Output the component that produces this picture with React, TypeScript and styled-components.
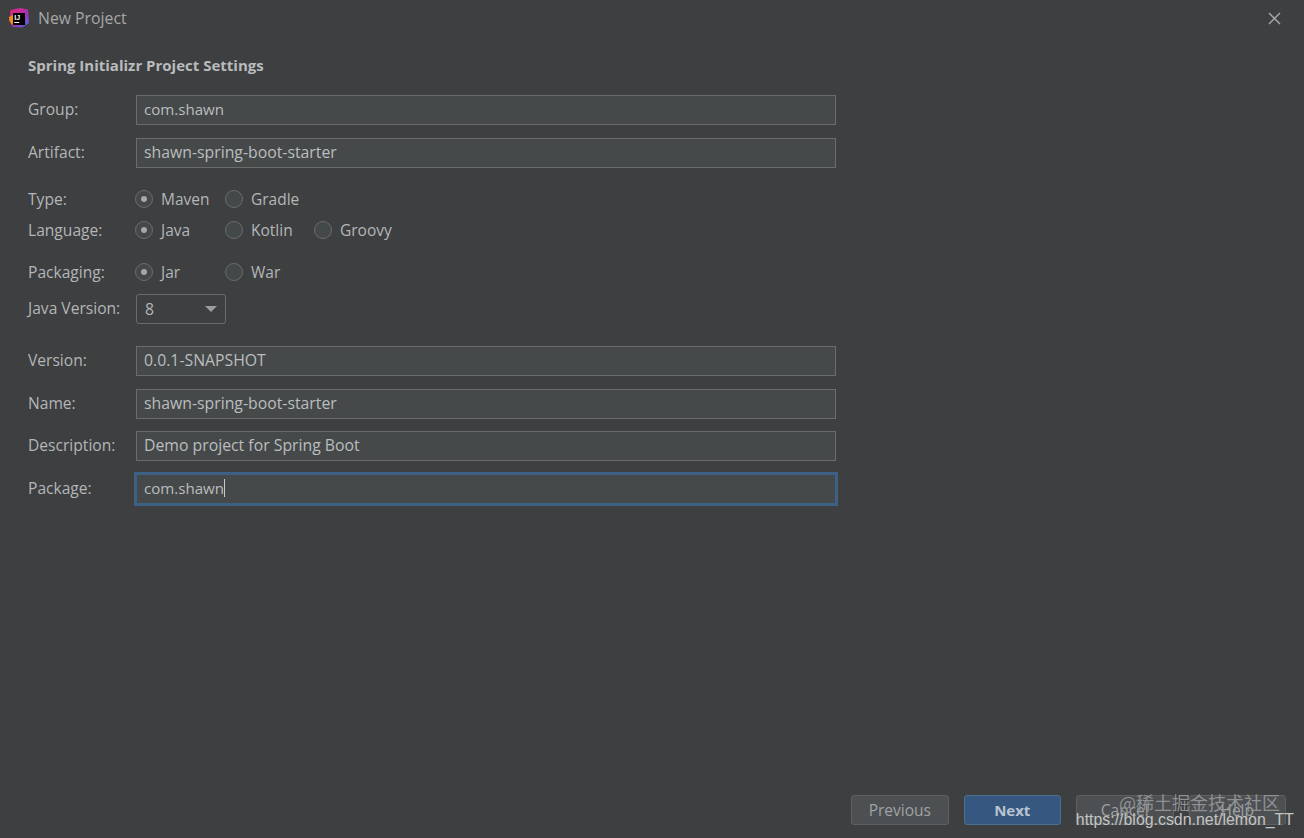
import React from "react";
import styled, { createGlobalStyle } from "styled-components";

const COLOURS = {
  Background: "#3d3f41",
  Text: "#b4b6b7",
  Field: "#45494a",
  FieldBorder: "#6a6c6c",
  Focus: "#3d6185",
  Button: "#4c5052",
  ButtonBorder: "#5e6060",
  Primary: "#365880",
  PrimaryBorder: "#4c708c",
};

const GlobalStyle = createGlobalStyle`
  html, body {
    margin: 0;
    padding: 0;
    background: ${COLOURS.Background};
  }

  body {
    font-family: "Open Sans", "Noto Sans", sans-serif;
    font-size: 15.8px;
    color: ${COLOURS.Text};
    overflow: hidden;
  }
`;

const Window = styled.div`
  position: relative;
  display: flex;
  flex-flow: column nowrap;
  width: 1304px;
  height: 838px;
  background-color: ${COLOURS.Background};
`;

const TitleBar = styled.div`
  display: flex;
  align-items: center;
  height: 36px;
  padding: 0 23px 0 8px;
  flex-shrink: 0;
`;

const WindowTitle = styled.span`
  margin-left: 8px;
  flex: 1;
  color: #a6a8a9;
`;

const Form = styled.div`
  display: flex;
  flex-flow: column nowrap;
  flex: 1;
  padding: 0 0 0 28px;
`;

const SectionTitle = styled.h2`
  margin: 19px 0 19px;
  height: 21px;
  line-height: 21px;
  font-size: 15px;
  font-weight: 700;
  color: #b9bbbc;
`;

const Row = styled.div<{ $top?: number }>`
  display: flex;
  align-items: center;
  height: 30px;
  margin-top: ${(p) => p.$top ?? 0}px;
`;

const Label = styled.label<{ $flush?: boolean }>`
  width: 108px;
  flex-shrink: 0;
  padding-bottom: ${(p) => (p.$flush ? 0 : 2)}px;
  font-size: 15.6px;
  white-space: nowrap;
`;

const Input = styled.div<{ $focused?: boolean }>`
  display: flex;
  align-items: center;
  box-sizing: border-box;
  width: 700px;
  height: 30px;
  padding: 0 0 2px 7px;
  background-color: ${COLOURS.Field};
  border: 1px solid ${COLOURS.FieldBorder};
  color: #bbbdbe;
  ${(p) =>
    p.$focused &&
    `
    outline: 2px solid ${COLOURS.Focus};
    outline-offset: 0;
    border-color: ${COLOURS.Focus};
  `}
`;

const ShortValue = styled.span`
  font-size: 15.1px;
`;

const Caret = styled.span`
  display: inline-block;
  width: 1px;
  height: 18px;
  background-color: #c8c8c8;
`;

const Radio = styled.span<{ $width: number }>`
  display: flex;
  align-items: center;
  width: ${(p) => p.$width}px;
  font-size: 15.5px;
`;

const RadioDot = styled.span<{ $checked?: boolean }>`
  display: flex;
  align-items: center;
  justify-content: center;
  box-sizing: border-box;
  width: 18px;
  height: 18px;
  margin: 0 8px 0 -1px;
  border-radius: 50%;
  border: 1px solid #6b6b6b;
  background-color: #43494a;

  &::after {
    content: "";
    display: ${(p) => (p.$checked ? "block" : "none")};
    width: 6px;
    height: 6px;
    border-radius: 50%;
    background-color: #a7a7a7;
  }
`;

const Select = styled.div`
  display: flex;
  align-items: center;
  justify-content: space-between;
  box-sizing: border-box;
  width: 90px;
  height: 30px;
  padding: 0 8px;
  border: 1px solid ${COLOURS.FieldBorder};
  border-radius: 3px;
`;

const Arrow = styled.span`
  width: 0;
  height: 0;
  border-left: 6px solid transparent;
  border-right: 6px solid transparent;
  border-top: 6px solid #9a9c9d;
`;

const Footer = styled.div`
  display: flex;
  justify-content: flex-end;
  gap: 15px;
  padding: 0 18px 13px 0;
`;

const Button = styled.button<{ $primary?: boolean }>`
  width: 97.5px;
  height: 30px;
  padding: 0;
  border-radius: 3px;
  font-family: inherit;
  font-size: ${(p) => (p.$primary ? 15 : 15.5)}px;
  font-weight: ${(p) => (p.$primary ? 700 : 400)};
  color: ${(p) => (p.$primary ? "#b9c4d0" : "#a0a2a3")};
  background-color: ${(p) => (p.$primary ? COLOURS.Primary : COLOURS.Button)};
  border: 1px solid ${(p) => (p.$primary ? COLOURS.PrimaryBorder : COLOURS.ButtonBorder)};
`;

const Watermark = styled.div`
  position: absolute;
  white-space: nowrap;
`;

const JuejinMark = styled(Watermark)`
  right: 24px;
  bottom: 24px;
  font-family: "Noto Sans CJK SC", sans-serif;
  font-size: 18px;
  line-height: 24px;
  color: #8f9192;
`;

const CsdnMark = styled(Watermark)`
  right: 10px;
  bottom: 8px;
  font-family: "Liberation Sans", sans-serif;
  font-size: 15.9px;
  line-height: 20px;
  color: #c4c4c4;
`;

const Logo = () => (
  <svg width="22" height="22" viewBox="0 0 22 22">
    <defs>
      <linearGradient id="lg" x1="0" y1="0" x2="1" y2="1">
        <stop offset="0" stopColor="#f0266f" />
        <stop offset="0.6" stopColor="#a033b8" />
        <stop offset="1" stopColor="#3f6ff0" />
      </linearGradient>
    </defs>
    <path d="M2.5 3 L12 1 L20 2.5 L21 16 L14 20.5 L5 20 L1.5 14 Z" fill="url(#lg)" />
    <path d="M1 10 L5 8 L7 15 L4 18 L1.5 14 Z" fill="#f58a1f" />
    <rect x="5" y="6" width="12" height="12" fill="#000" />
    <text x="6.2" y="12.6" fontFamily="Liberation Sans" fontWeight="700" fontSize="7" fill="#fff">
      IJ
    </text>
    <rect x="6.2" y="15" width="5" height="1" fill="#fff" />
  </svg>
);

const CloseIcon = () => (
  <svg width="13" height="13" viewBox="0 0 13 13" stroke="#a8aaab" strokeWidth="1.4">
    <path d="M1 1 L12 12 M12 1 L1 12" />
  </svg>
);

const RadioOption = (props: { label: string; width: number; checked?: boolean }) => (
  <Radio $width={props.width}>
    <RadioDot $checked={props.checked} />
    {props.label}
  </Radio>
);

export default function App() {
  return (
    <Window>
      <GlobalStyle />
      <TitleBar>
        <Logo />
        <WindowTitle>New Project</WindowTitle>
        <CloseIcon />
      </TitleBar>
      <Form>
        <SectionTitle>Spring Initializr Project Settings</SectionTitle>
        <Row>
          <Label>Group:</Label>
          <Input>
            <ShortValue>com.shawn</ShortValue>
          </Input>
        </Row>
        <Row $top={13}>
          <Label>Artifact:</Label>
          <Input>shawn-spring-boot-starter</Input>
        </Row>
        <Row $top={16}>
          <Label $flush>Type:</Label>
          <RadioOption label="Maven" width={90} checked />
          <RadioOption label="Gradle" width={90} />
        </Row>
        <Row $top={1}>
          <Label $flush>Language:</Label>
          <RadioOption label="Java" width={90} checked />
          <RadioOption label="Kotlin" width={89} />
          <RadioOption label="Groovy" width={90} />
        </Row>
        <Row $top={12}>
          <Label $flush>Packaging:</Label>
          <RadioOption label="Jar" width={90} checked />
          <RadioOption label="War" width={90} />
        </Row>
        <Row $top={7}>
          <Label>Java Version:</Label>
          <Select>
            8
            <Arrow />
          </Select>
        </Row>
        <Row $top={22}>
          <Label>Version:</Label>
          <Input>0.0.1-SNAPSHOT</Input>
        </Row>
        <Row $top={13}>
          <Label>Name:</Label>
          <Input>shawn-spring-boot-starter</Input>
        </Row>
        <Row $top={12}>
          <Label>Description:</Label>
          <Input>Demo project for Spring Boot</Input>
        </Row>
        <Row $top={13}>
          <Label>Package:</Label>
          <Input $focused>
            <ShortValue>com.shawn</ShortValue>
            <Caret />
          </Input>
        </Row>
      </Form>
      <Footer>
        <Button>Previous</Button>
        <Button $primary>Next</Button>
        <Button>Cancel</Button>
        <Button>Help</Button>
      </Footer>
      <JuejinMark>@稀土掘金技术社区</JuejinMark>
      <CsdnMark>https://blog.csdn.net/lemon_TT</CsdnMark>
    </Window>
  );
}
